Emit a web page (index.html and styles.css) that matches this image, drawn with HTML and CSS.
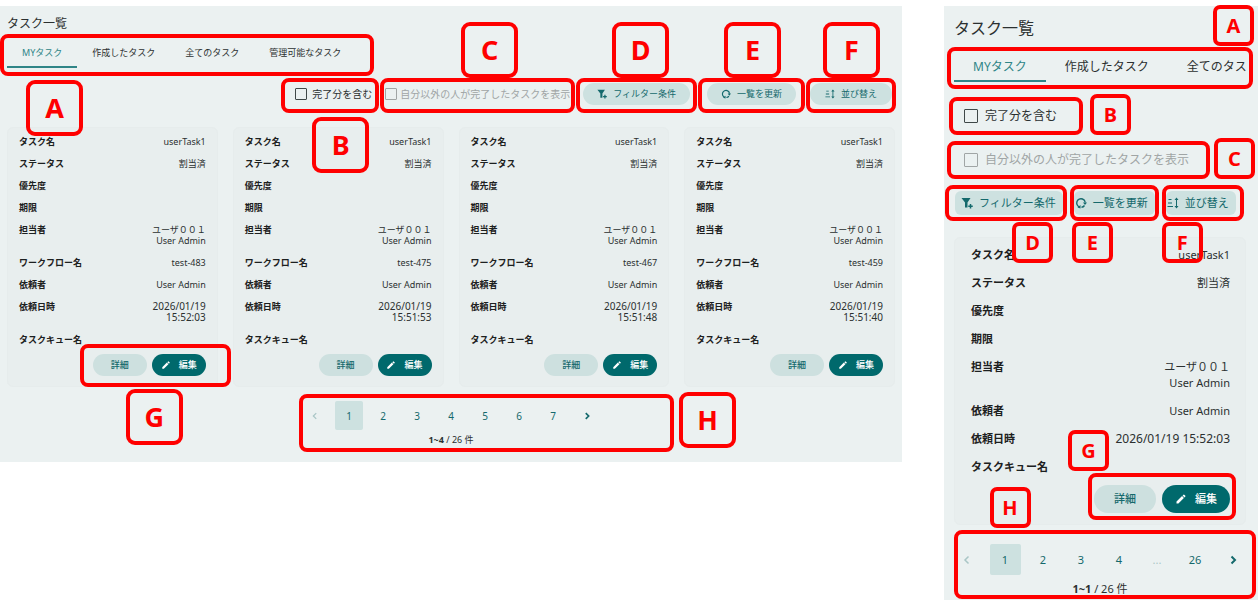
FILE: index.html
```
<!DOCTYPE html>
<html lang="ja">
    <head>
        <meta charset="UTF-8" />
        <meta name="viewport" content="width=device-width, initial-scale=1.0" />
        <title>タスク一覧</title>
        <link rel="stylesheet" href="styles.css">
    </head>
    <body>
        <!-- 共通アイコン -->
        <svg class="icon-defs" aria-hidden="true">
            <symbol id="icon-filter" viewBox="0 0 24 24">
                <path d="M1 2h18l-6 9v10H8V11z" />
                <path d="M17.500 14h3v3h3v3h-3v3h-3v-3h-3v-3h3z" />
            </symbol>
            <symbol id="icon-refresh" viewBox="0 0 24 24">
                <path d="M9 20A8.500 8.500 0 0 1 15 4M20.500 11A8.500 8.500 0 0 0 15 4M13 20.500A8.500 8.500 0 0 0 19 17" fill="none" stroke="currentColor" stroke-width="2.800" />
                <path d="M16 11h8l-4 5z" />
                <path d="M5 21l6 2V16z" />
            </symbol>
            <symbol id="icon-sort" viewBox="0 0 24 24">
                <path d="M3 4h6v2H3zM2 11h8v2H2zM1 18h11v2H1z" />
                <path d="M19 1l4 5h-3v12h3l-4 5-4-5h3V6h-3z" />
            </symbol>
            <symbol id="icon-edit" viewBox="0 0 24 24">
                <path d="M3 17.200V21h3.800L17.800 9.900l-3.700-3.700zM20.700 7a1 1 0 0 0 0-1.400l-2.300-2.300a1 1 0 0 0-1.400 0l-1.800 1.800 3.700 3.700z" />
            </symbol>
            <symbol id="icon-left" viewBox="0 0 24 24">
                <path d="M15 5l-7 7 7 7" fill="none" stroke="currentColor" stroke-width="3" />
            </symbol>
            <symbol id="icon-right" viewBox="0 0 24 24">
                <path d="M9 5l7 7-7 7" fill="none" stroke="currentColor" stroke-width="4" />
            </symbol>
        </svg>

        <main class="page">
            <!-- PC表示 -->
            <section class="panel pc">
                <h1>タスク一覧</h1>
                <div class="mark mark-tabs">
                    <nav class="tabs">
                        <button class="tab active">MYタスク</button>
                        <button class="tab">作成したタスク</button>
                        <button class="tab">全てのタスク</button>
                        <button class="tab">管理可能なタスク</button>
                    </nav>
                    <span class="badge badge-a">A</span>
                </div>

                <div class="toolbar">
                    <div class="mark mark-done">
                        <label class="check"><input type="checkbox" />完了分を含む</label>
                        <span class="badge badge-b">B</span>
                    </div>
                    <div class="mark mark-others">
                        <label class="check disabled"><input type="checkbox" disabled />自分以外の人が完了したタスクを表示</label>
                        <span class="badge badge-c">C</span>
                    </div>
                    <div class="mark mark-filter">
                        <button class="tool"><svg><use href="#icon-filter" /></svg>フィルター条件</button>
                        <span class="badge badge-d">D</span>
                    </div>
                    <div class="mark mark-refresh">
                        <button class="tool"><svg><use href="#icon-refresh" /></svg>一覧を更新</button>
                        <span class="badge badge-e">E</span>
                    </div>
                    <div class="mark mark-sort">
                        <button class="tool"><svg><use href="#icon-sort" /></svg>並び替え</button>
                        <span class="badge badge-f">F</span>
                    </div>
                </div>

                <div class="cards">
                    <article class="card">
                        <dl>
                            <div class="row"><dt>タスク名</dt><dd>userTask1</dd></div>
                            <div class="row"><dt>ステータス</dt><dd>割当済</dd></div>
                            <div class="row"><dt>優先度</dt><dd></dd></div>
                            <div class="row"><dt>期限</dt><dd></dd></div>
                            <div class="row"><dt>担当者</dt><dd>ユーザ００１<br>User Admin</dd></div>
                            <div class="row"><dt>ワークフロー名</dt><dd>test-483</dd></div>
                            <div class="row"><dt>依頼者</dt><dd>User Admin</dd></div>
                            <div class="row"><dt>依頼日時</dt><dd class="date">2026/01/19<br>15:52:03</dd></div>
                            <div class="row"><dt>タスクキュー名</dt><dd></dd></div>
                        </dl>
                        <div class="actions">
                            <button class="detail">詳細</button>
                            <button class="edit"><svg><use href="#icon-edit" /></svg>編集</button>
                            <div class="frame"><span class="badge badge-g">G</span></div>
                        </div>
                    </article>
                    <article class="card">
                        <dl>
                            <div class="row"><dt>タスク名</dt><dd>userTask1</dd></div>
                            <div class="row"><dt>ステータス</dt><dd>割当済</dd></div>
                            <div class="row"><dt>優先度</dt><dd></dd></div>
                            <div class="row"><dt>期限</dt><dd></dd></div>
                            <div class="row"><dt>担当者</dt><dd>ユーザ００１<br>User Admin</dd></div>
                            <div class="row"><dt>ワークフロー名</dt><dd>test-475</dd></div>
                            <div class="row"><dt>依頼者</dt><dd>User Admin</dd></div>
                            <div class="row"><dt>依頼日時</dt><dd class="date">2026/01/19<br>15:51:53</dd></div>
                            <div class="row"><dt>タスクキュー名</dt><dd></dd></div>
                        </dl>
                        <div class="actions">
                            <button class="detail">詳細</button>
                            <button class="edit"><svg><use href="#icon-edit" /></svg>編集</button>
                        </div>
                    </article>
                    <article class="card">
                        <dl>
                            <div class="row"><dt>タスク名</dt><dd>userTask1</dd></div>
                            <div class="row"><dt>ステータス</dt><dd>割当済</dd></div>
                            <div class="row"><dt>優先度</dt><dd></dd></div>
                            <div class="row"><dt>期限</dt><dd></dd></div>
                            <div class="row"><dt>担当者</dt><dd>ユーザ００１<br>User Admin</dd></div>
                            <div class="row"><dt>ワークフロー名</dt><dd>test-467</dd></div>
                            <div class="row"><dt>依頼者</dt><dd>User Admin</dd></div>
                            <div class="row"><dt>依頼日時</dt><dd class="date">2026/01/19<br>15:51:48</dd></div>
                            <div class="row"><dt>タスクキュー名</dt><dd></dd></div>
                        </dl>
                        <div class="actions">
                            <button class="detail">詳細</button>
                            <button class="edit"><svg><use href="#icon-edit" /></svg>編集</button>
                        </div>
                    </article>
                    <article class="card">
                        <dl>
                            <div class="row"><dt>タスク名</dt><dd>userTask1</dd></div>
                            <div class="row"><dt>ステータス</dt><dd>割当済</dd></div>
                            <div class="row"><dt>優先度</dt><dd></dd></div>
                            <div class="row"><dt>期限</dt><dd></dd></div>
                            <div class="row"><dt>担当者</dt><dd>ユーザ００１<br>User Admin</dd></div>
                            <div class="row"><dt>ワークフロー名</dt><dd>test-459</dd></div>
                            <div class="row"><dt>依頼者</dt><dd>User Admin</dd></div>
                            <div class="row"><dt>依頼日時</dt><dd class="date">2026/01/19<br>15:51:40</dd></div>
                            <div class="row"><dt>タスクキュー名</dt><dd></dd></div>
                        </dl>
                        <div class="actions">
                            <button class="detail">詳細</button>
                            <button class="edit"><svg><use href="#icon-edit" /></svg>編集</button>
                        </div>
                    </article>
                </div>

                <div class="pager">
                    <nav class="pages">
                        <button disabled aria-label="前へ"><svg><use href="#icon-left" /></svg></button>
                        <button class="active">1</button>
                        <button>2</button>
                        <button>3</button>
                        <button>4</button>
                        <button>5</button>
                        <button>6</button>
                        <button>7</button>
                        <button aria-label="次へ"><svg><use href="#icon-right" /></svg></button>
                    </nav>
                    <p class="count"><b>1~4</b> / 26 件</p>
                    <div class="frame"><span class="badge badge-h">H</span></div>
                </div>
            </section>

            <!-- スマートフォン表示 -->
            <section class="panel sp">
                <h1>タスク一覧</h1>
                <div class="mark mark-tabs">
                    <nav class="tabs">
                        <button class="tab active">MYタスク</button>
                        <button class="tab">作成したタスク</button>
                        <button class="tab">全てのタスク</button>
                    </nav>
                    <span class="badge badge-a">A</span>
                </div>

                <div class="mark mark-done">
                    <label class="check"><input type="checkbox" />完了分を含む</label>
                    <span class="badge badge-b">B</span>
                </div>
                <div class="mark mark-others">
                    <label class="check disabled"><input type="checkbox" disabled />自分以外の人が完了したタスクを表示</label>
                    <span class="badge badge-c">C</span>
                </div>

                <div class="toolbar">
                    <div class="mark mark-filter">
                        <button class="tool"><svg><use href="#icon-filter" /></svg>フィルター条件</button>
                        <span class="badge badge-d">D</span>
                    </div>
                    <div class="mark mark-refresh">
                        <button class="tool"><svg><use href="#icon-refresh" /></svg>一覧を更新</button>
                        <span class="badge badge-e">E</span>
                    </div>
                    <div class="mark mark-sort">
                        <button class="tool"><svg><use href="#icon-sort" /></svg>並び替え</button>
                        <span class="badge badge-f">F</span>
                    </div>
                </div>

                <div class="cards">
                    <article class="card">
                        <dl>
                            <div class="row"><dt>タスク名</dt><dd>userTask1</dd></div>
                            <div class="row"><dt>ステータス</dt><dd>割当済</dd></div>
                            <div class="row"><dt>優先度</dt><dd></dd></div>
                            <div class="row"><dt>期限</dt><dd></dd></div>
                            <div class="row"><dt>担当者</dt><dd>ユーザ００１<br>User Admin</dd></div>
                            <div class="row"><dt>依頼者</dt><dd>User Admin</dd></div>
                            <div class="row"><dt>依頼日時</dt><dd class="date">2026/01/19 15:52:03</dd></div>
                            <div class="row"><dt>タスクキュー名</dt><dd></dd></div>
                        </dl>
                        <div class="actions">
                            <button class="detail">詳細</button>
                            <button class="edit"><svg><use href="#icon-edit" /></svg>編集</button>
                            <div class="frame"><span class="badge badge-g">G</span></div>
                        </div>
                    </article>
                </div>

                <div class="pager">
                    <nav class="pages">
                        <button disabled aria-label="前へ"><svg><use href="#icon-left" /></svg></button>
                        <button class="active">1</button>
                        <button>2</button>
                        <button>3</button>
                        <button>4</button>
                        <button disabled>...</button>
                        <button>26</button>
                        <button aria-label="次へ"><svg><use href="#icon-right" /></svg></button>
                    </nav>
                    <p class="count"><b>1~1</b> / 26 件</p>
                    <div class="frame"><span class="badge badge-h">H</span></div>
                </div>
            </section>
        </main>
    </body>
</html>
```
FILE: styles.css
```
* {
    box-sizing: border-box;
}

body {
    margin: 0;
    background-color: #fff;
    color: #2b3030;
    font-family: "Noto Sans", "Noto Sans CJK JP", sans-serif;
}

h1,
dl,
dd,
p {
    margin: 0;
}

button {
    padding: 0;
    border: none;
    background: none;
    color: inherit;
    font: inherit;
    white-space: nowrap;
    cursor: pointer;
}

svg {
    flex: none;
    fill: currentColor;
}

.icon-defs {
    display: none;
}

.page {
    display: flex;
    align-items: flex-start;
    gap: 42px;
    padding-top: 6px;
}

.panel {
    display: flex;
    flex-direction: column;
    background-color: #ebf1f1;
}

.panel h1 {
    font-weight: 400;
}

/* 赤枠 */
.mark,
.frame {
    border: 4px solid #f00;
    border-radius: 8px;
}

.mark {
    position: relative;
}

.frame {
    position: absolute;
    pointer-events: none;
}

.badge {
    position: absolute;
    display: flex;
    align-items: center;
    justify-content: center;
    border: 4px solid #f00;
    border-radius: 9px;
    color: #f00;
    font-weight: 700;
    z-index: 1;
}

/* タブ */
.tabs {
    display: flex;
    overflow: hidden;
}

.tab {
    flex: none;
    height: 30px;
    padding-top: 2px;
    border-bottom: 2px solid transparent;
}

.tab.active {
    border-bottom-color: #2f8587;
    color: #2f8587;
}

/* ツールバー */
.toolbar {
    display: flex;
}

.check {
    display: flex;
    align-items: center;
    white-space: nowrap;
}

.check input {
    appearance: none;
    margin: 0;
    border: 1px solid #3f4848;
    border-radius: 1px;
}

.check.disabled {
    color: #a0a5a5;
}

.check.disabled input {
    border-color: #a0a5a5;
}

.tool {
    display: flex;
    align-items: center;
    justify-content: center;
    background-color: #cde1e0;
    color: #14696c;
}

/* カード */
.cards {
    display: grid;
}

.card {
    border: 1px solid #e6ecec;
    border-radius: 6px;
    background-color: #e8eeee;
}

.card dl {
    display: flex;
    flex-direction: column;
}

.row {
    display: flex;
    justify-content: space-between;
}

.row dt {
    font-weight: 700;
    color: #1c2020;
    white-space: nowrap;
}

.row dd {
    text-align: right;
}

.actions {
    position: relative;
    display: flex;
    justify-content: flex-end;
}

.detail,
.edit {
    display: flex;
    align-items: center;
    justify-content: center;
    border-radius: 14px;
    font-weight: 500;
}

.detail {
    background-color: #cde0df;
    color: #14696c;
}

.edit {
    background-color: #00696c;
    color: #fff;
}

/* ページ送り */
.pager {
    position: relative;
    align-self: center;
}

.pages {
    display: flex;
}

.pages button {
    display: flex;
    align-items: center;
    justify-content: center;
    border-radius: 2px;
    color: #14696c;
}

.pages button.active {
    background-color: #cde1e0;
}

.pages button:disabled {
    color: #a9c6c6;
}

.count {
    text-align: center;
}

/* PC表示 */
.pc {
    flex: 1;
    padding: 10px 7px 16px;
    font-size: 9px;
    line-height: 12px;
}

.pc h1 {
    font-size: 12px;
    line-height: 16px;
}

.pc svg {
    width: 10px;
    height: 10px;
}

.pc .badge {
    width: 57px;
    height: 56px;
    font-size: 27px;
}

.pc .mark-tabs {
    align-self: flex-start;
    height: 42px;
    margin: 2px 0 0 -7px;
    padding: 0 14px 0 3px;
}

.pc .tab {
    padding-left: 15px;
    padding-right: 15px;
}

.pc .toolbar {
    justify-content: flex-end;
    gap: 1px;
    margin: 2px -1px 0 0;
}

.pc .toolbar .mark {
    height: 35px;
}

.pc .check {
    height: 24px;
    font-size: 10px;
}

.pc .check input {
    width: 12px;
    height: 12px;
}

.pc .mark-done {
    padding: 0 3px 0 10px;
}

.pc .mark-done .check {
    gap: 5px;
}

.pc .mark-others {
    padding: 0 1px;
}

.pc .mark-others .check {
    gap: 3px;
}

.pc .tool {
    gap: 6px;
    height: 22px;
    margin-top: 1px;
    padding: 0 14px;
    border-radius: 11px;
}

.pc .mark-filter {
    padding: 0 3px;
}

.pc .mark-refresh {
    padding: 0 5px;
}

.pc .mark-sort .tool {
    padding: 0 15px;
}

.pc .cards {
    grid-template-columns: repeat(4, 1fr);
    gap: 15px;
    margin-top: 14px;
}

.pc .card {
    padding: 8px 11px 10px;
}

.pc dl {
    gap: 11px;
    line-height: 11px;
}

.pc .date {
    font-size: 10px;
}

.pc .actions {
    gap: 5px;
    width: fit-content;
    margin: 9px 0 0 auto;
}

.pc .detail,
.pc .edit {
    gap: 8px;
    width: 54px;
    height: 22px;
}

.pc .pager {
    margin-top: 14px;
}

.pc .pages {
    gap: 6px;
}

.pc .pages button {
    width: 28px;
    height: 29px;
    font-size: 10px;
}

.pc .count {
    margin-top: 4px;
}

.pc .actions .frame {
    inset: -10px -25px -11px -13px;
}

.pc .pager .frame {
    inset: -7px -73px -6px -2px;
}

.pc .badge-a {
    top: 42px;
    left: 22px;
}

.pc .badge-b {
    top: 35px;
    left: 27px;
}

.pc .badge-c {
    top: -60px;
    left: 77px;
}

.pc .badge-d {
    top: -60px;
    left: 32px;
}

.pc .badge-e {
    top: -60px;
    left: 22px;
}

.pc .badge-f {
    top: -60px;
    left: 13px;
}

.pc .badge-g {
    top: 41px;
    left: 42px;
}

.pc .badge-h {
    top: -6px;
    left: 376px;
}

/* スマートフォン表示 */
.sp {
    flex: none;
    width: 314px;
    padding: 10px 12px 3px 10px;
    font-size: 11px;
    line-height: 16px;
}

.sp h1 {
    font-size: 16px;
    line-height: 24px;
}

.sp svg {
    width: 12px;
    height: 12px;
}

.sp .badge {
    width: 41px;
    height: 41px;
    border-radius: 7px;
    font-size: 20px;
}

.sp .mark-tabs {
    height: 42px;
    margin: 7px -7px 0;
    padding: 0 2px 0 3px;
}

.sp .tab {
    height: 31px;
    padding-left: 19px;
    padding-right: 19px;
    font-size: 12px;
}

.sp .check {
    gap: 7px;
    height: 30px;
    font-size: 12px;
}

.sp .check input {
    width: 14px;
    height: 14px;
}

.sp .mark-done {
    align-self: flex-start;
    margin: 8px 0 0 -5px;
    padding: 0 22px 0 11px;
}

.sp .mark-others {
    align-self: flex-start;
    margin: 6px 0 0 -7px;
    padding: 0 17px 0 13px;
}

.sp .toolbar {
    gap: 3px;
    margin: 6px 0 0 -9px;
}

.sp .toolbar .mark {
    height: 36px;
}

.sp .tool {
    gap: 6px;
    height: 24px;
    margin-top: 2px;
    padding: 0 7px 0 1px;
    border-radius: 6px;
}

.sp .mark-filter {
    padding-left: 6px;
}

.sp .mark-filter .tool {
    padding-left: 6px;
}

.sp .mark-sort {
    padding-right: 4px;
}

.sp .cards {
    margin-top: 16px;
}

.sp .card {
    padding: 9px 15px 11px 16px;
}

.sp dl {
    gap: 12px;
}

.sp .date {
    font-size: 12px;
}

.sp .actions {
    gap: 6px;
    width: fit-content;
    margin: 10px 0 0 auto;
}

.sp .detail,
.sp .edit {
    gap: 8px;
    height: 28px;
    padding: 0 13px;
}

.sp .detail {
    padding: 0 20px;
}

.sp .pager {
    margin-top: 19px;
}

.sp .pages {
    gap: 7px;
}

.sp .pages button {
    width: 31px;
    height: 31px;
}

.sp .count {
    margin-top: 6px;
}

.sp .actions .frame {
    inset: -12px -6px -7px;
}

.sp .pager .frame {
    inset: -14px -7px -2px 2px;
}

.sp .badge-a {
    top: -46px;
    right: -5px;
}

.sp .badge-b {
    top: -7px;
    left: 137px;
}

.sp .badge-c {
    top: -7px;
    left: 263px;
}

.sp .badge-d {
    top: 33px;
    left: 63px;
}

.sp .badge-e {
    top: 33px;
    left: -2px;
}

.sp .badge-f {
    top: 33px;
    left: -4px;
}

.sp .badge-g {
    top: -47px;
    left: -24px;
}

.sp .badge-h {
    top: -47px;
    left: 32px;
}
```
